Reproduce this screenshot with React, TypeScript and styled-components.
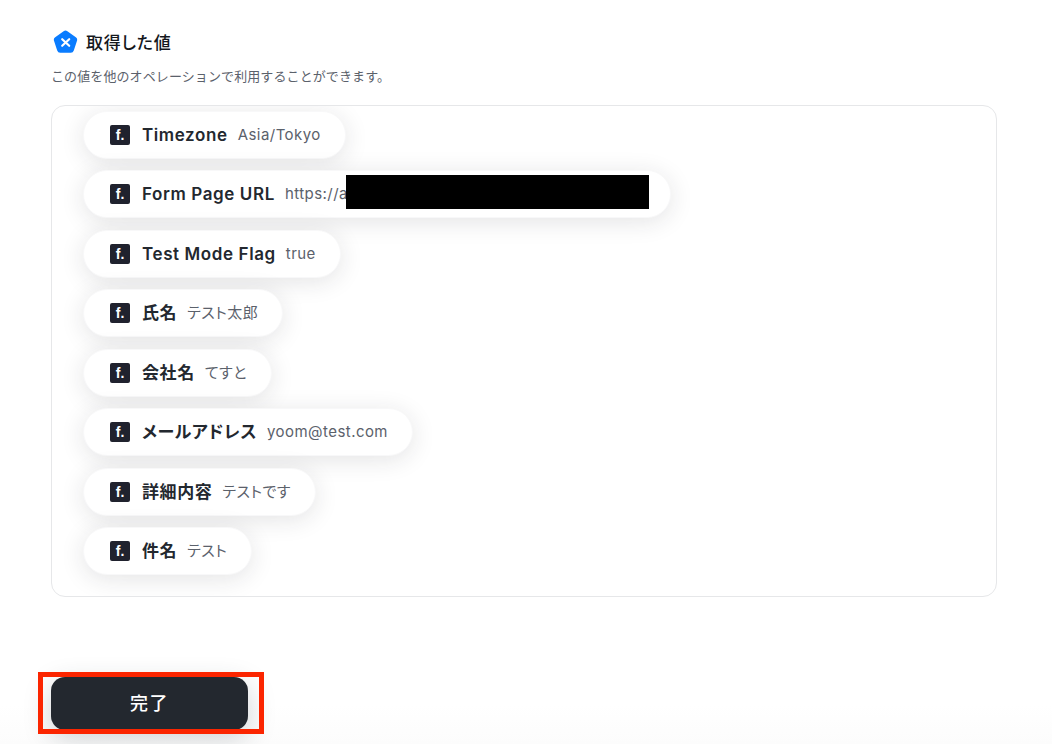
import styled, { createGlobalStyle } from "styled-components"

interface IField {
  label: string
  value: string
  redacted?: boolean
}

const fields: IField[] = [
  { label: "Timezone", value: "Asia/Tokyo" },
  { label: "Form Page URL", value: "https://a", redacted: true },
  { label: "Test Mode Flag", value: "true" },
  { label: "氏名", value: "テスト太郎" },
  { label: "会社名", value: "てすと" },
  { label: "メールアドレス", value: "yoom@test.com" },
  { label: "詳細内容", value: "テストです" },
  { label: "件名", value: "テスト" },
]

const GlobalStyle = createGlobalStyle`
  html, body {
    margin: 0;
    padding: 0;
    background: #fff;
  }
  body {
    font-family: Inter, "Noto Sans CJK JP", sans-serif;
    font-feature-settings: "palt";
    color: #23282f;
  }
`

const Page = styled.main`
  box-sizing: border-box;
  width: 1052px;
  height: 744px;
  padding: 28px 55px 0 51px;
  overflow: hidden;
  background: linear-gradient(to bottom, #fff 705px, #fcfcfc 744px);
`

const TitleRow = styled.div`
  display: flex;
  align-items: center;
  gap: 8px;
  margin-left: 2px;
  height: 28px;
`

const Title = styled.h2`
  margin: 0;
  padding-bottom: 2px;
  font-size: 17px;
  font-weight: 500;
  letter-spacing: 0.8px;
  color: #14171c;
`

const Subtitle = styled.p`
  margin: 11px 0 0;
  font-size: 13px;
  font-feature-settings: normal;
  line-height: 18px;
  letter-spacing: 0.1px;
  color: #5b616b;
`

const Panel = styled.section`
  box-sizing: border-box;
  height: 492px;
  margin-top: 20px;
  padding: 4.6px 30.5px 0;
  border: 1px solid #e6e7e9;
  border-radius: 14px;
  overflow: hidden;
  display: flex;
  flex-direction: column;
  align-items: flex-start;
  gap: 11.5px;
`

const Chip = styled.div`
  box-sizing: border-box;
  flex: none;
  display: inline-flex;
  align-items: center;
  height: 48px;
  padding: 0 24px 0 26.5px;
  background: #fff;
  border: 1px solid #f8f8f9;
  border-radius: 24px;
  box-shadow: 0 4px 24px rgba(30, 35, 45, 0.12);
`

const ServiceIcon = styled.span`
  flex: none;
  display: flex;
  align-items: center;
  justify-content: center;
  width: 20px;
  height: 20px;
  margin-right: 12px;
  border-radius: 2px;
  background: #20222e;
  color: #fff;
  font-family: "Liberation Sans", sans-serif;
  font-size: 14px;
  font-weight: 700;
  line-height: 20px;
`

const Label = styled.span`
  font-size: 17px;
  font-weight: 600;
  line-height: 24px;
  letter-spacing: 0.6px;
  white-space: nowrap;
`

const Value = styled.span`
  display: inline-flex;
  align-items: center;
  margin-left: 10px;
  font-size: 15px;
  line-height: 24px;
  letter-spacing: 0.45px;
  white-space: nowrap;
  color: #5b616b;
`

const Redaction = styled.span`
  display: inline-block;
  width: 303px;
  height: 34px;
  margin: 0 -3px 5px -2px;
  background: #000;
`

const Footer = styled.div`
  position: relative;
  width: 197px;
  margin-top: 80px;
`

const DoneButton = styled.button`
  display: block;
  width: 197px;
  height: 53px;
  padding: 0 0 3px;
  border: 0;
  border-radius: 14px;
  background: #23282f;
  color: #fff;
  font-family: inherit;
  font-size: 18px;
  font-weight: 500;
  letter-spacing: 1.5px;
  box-shadow: 0 8px 28px rgba(35, 50, 60, 0.22);
`

const Highlight = styled.span`
  position: absolute;
  left: -13px;
  top: -5px;
  width: 226px;
  height: 62px;
  box-sizing: border-box;
  border: 5px solid #fb2500;
  pointer-events: none;
`

const LogoMark = () => (
  <svg width="25" height="24" viewBox="0 0 25 24" aria-hidden="true">
    <path
      d="M10.6 1.2a3.2 3.2 0 0 1 3.8 0l8.4 6a3.2 3.2 0 0 1 1.2 3.6l-3.2 9.8a3.2 3.2 0 0 1-3 2.2H7.2a3.2 3.2 0 0 1-3-2.2L1 10.8a3.2 3.2 0 0 1 1.2-3.6z"
      fill="#0a7cff"
    />
    <path
      d="M9.2 9.2l7 6.6M16.2 9.2l-7 6.6"
      stroke="#fff"
      strokeWidth="2.2"
      strokeLinecap="round"
      fill="none"
    />
  </svg>
)

const App = () => {
  return (
    <>
      <GlobalStyle />
      <Page>
        <TitleRow>
          <LogoMark />
          <Title>取得した値</Title>
        </TitleRow>
        <Subtitle>この値を他のオペレーションで利用することができます。</Subtitle>

        <Panel>
          {fields.map(field => (
            <Chip key={field.label}>
              <ServiceIcon>f.</ServiceIcon>
              <Label>{field.label}</Label>
              <Value>
                {field.value}
                {field.redacted && <Redaction />}
              </Value>
            </Chip>
          ))}
        </Panel>

        <Footer>
          <DoneButton>完了</DoneButton>
          <Highlight />
        </Footer>
      </Page>
    </>
  )
}

export default App
